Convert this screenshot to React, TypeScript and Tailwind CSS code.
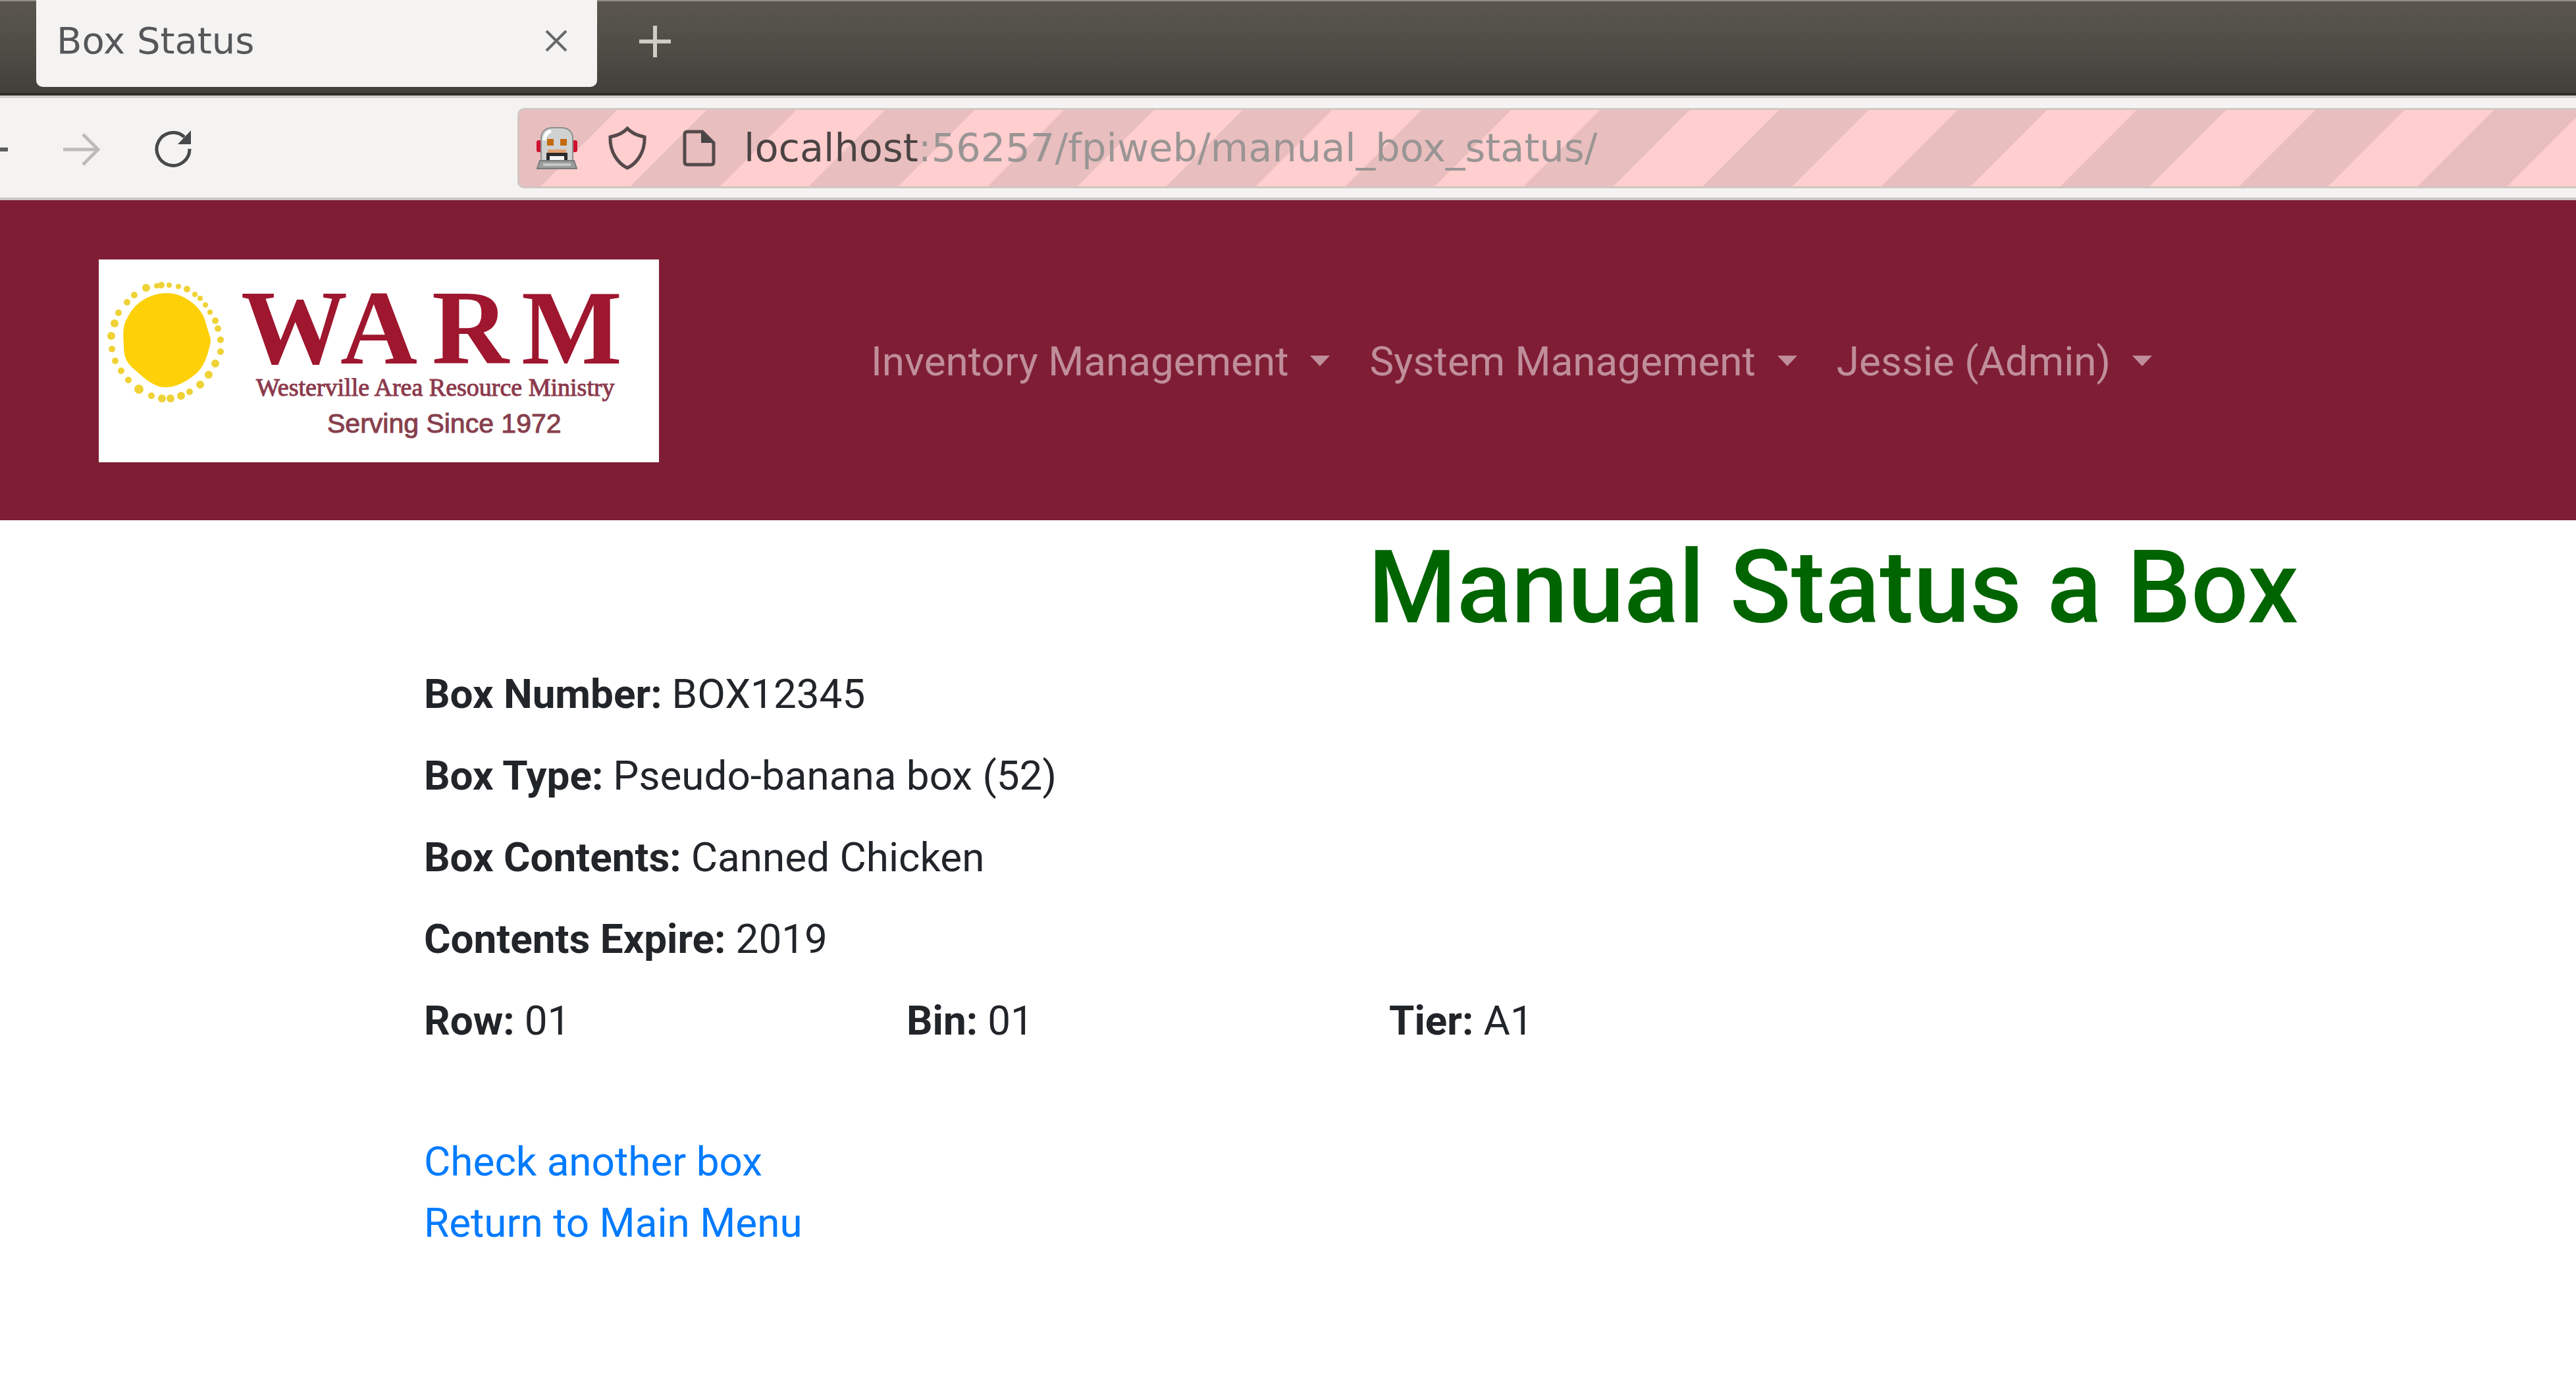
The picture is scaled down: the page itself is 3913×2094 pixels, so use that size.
import React from "react";

// Centre and radius of each ray around the sun.
const RAYS = [
  [72, 43, 6], [88, 40, 4], [95, 39, 5], [107, 39, 4], [121, 41, 4], [134, 45, 5], [146, 53, 4], [154, 59, 4],
  [162, 69, 4], [169, 80, 4], [177, 93, 5], [181, 105, 5], [185, 122, 5], [185, 140, 5], [177, 158, 6], [167, 175, 6],
  [154, 190, 6], [138, 201, 5], [125, 207, 6], [109, 211, 6], [96, 211, 6], [80, 207, 5], [61, 197, 7], [45, 183, 5],
  [34, 169, 5], [25, 154, 5], [20, 136, 5], [19, 116, 6], [24, 97, 6], [30, 81, 5], [43, 65, 5], [54, 54, 5],
];

function WarmLogo() {
  return (
    <svg viewBox="0 0 851 308" className="h-[308px] w-[851px] shrink-0 bg-white" role="img" aria-label="WARM logo">
      <path
        d="M104 51C128 51 158 71 163 98C167 113 172 120 169 130C165 145 161 163 146 175C131 187 115 195 99 194C81 193 65 176 53 166C42 156 38 148 38 130C37 113 36 100 44 88C55 64 80 51 104 51Z"
        fill="#fdd008"
      />
      {RAYS.map(([x, y, r]) => (
        <circle key={`${x}-${y}`} cx={x} cy={y} r={r} fill="#efd235" />
      ))}
      <g fill="#9f162f" fontFamily="Liberation Serif" fontWeight="700" fontSize="162">
        <text x="216" y="158">W</text>
        <text x="367" y="158">A</text>
        <text x="506" y="158">R</text>
        <text x="642" y="158">M</text>
      </g>
      <text x="239" y="207" fill="#8c3a4c" fontFamily="Liberation Serif" fontSize="38" stroke="#8c3a4c" strokeWidth="1">
        Westerville Area Resource Ministry
      </text>
      <text x="347" y="263" fill="#87404d" fontFamily="Liberation Sans" fontSize="41" stroke="#87404d" strokeWidth="1">
        Serving Since 1972
      </text>
    </svg>
  );
}

function RobotIcon() {
  return (
    <svg viewBox="0 0 62 64" className="h-[64px] w-[62px] shrink-0" aria-hidden="true">
      <rect x="0" y="20" width="8" height="18" rx="3" fill="#d0102e" />
      <rect x="54" y="20" width="8" height="18" rx="3" fill="#d0102e" />
      <path d="M7 53V15Q9 2 23 1H39Q53 2 55 15V53Z" fill="#cfd2d1" stroke="#8d908f" strokeWidth="2" />
      <path d="M12 20Q13 8 22 6" fill="none" stroke="#ffffff" strokeWidth="5" />
      <rect x="16" y="18" width="10" height="10" fill="#c4690c" />
      <rect x="36" y="18" width="10" height="10" fill="#c4690c" />
      <rect x="17" y="34" width="28" height="6" fill="#e0a070" />
      <path d="M15 39H47V51H42V45H20V51H15Z" fill="#2b2b2b" />
      <rect x="20" y="44" width="22" height="6" fill="#f4f4f4" />
      <path d="M5 51H57L61 63H1Z" fill="#9a9d9c" stroke="#777a79" strokeWidth="2" />
      <path d="M10 57H52" stroke="#c5c8c7" strokeWidth="4" />
    </svg>
  );
}

function MenuItem({ label }: { label: string }) {
  return (
    <button type="button" className="flex items-center gap-[33px] whitespace-nowrap text-[62px] leading-[93px] text-white/50">
      {label}
      <svg viewBox="0 0 30 16" className="h-[16px] w-[30px]" aria-hidden="true">
        <path d="M0 0H30L15 16Z" fill="currentColor" />
      </svg>
    </button>
  );
}

function Field({ label, value }: { label: string; value: string }) {
  return (
    <div className="flex gap-[15px]">
      <dt className="font-bold">{label}:</dt>
      <dd>{value}</dd>
    </div>
  );
}

export default function App() {
  return (
    <div className="min-h-screen overflow-hidden bg-white font-['Roboto',sans-serif] text-[#212529]">
      <div className="flex h-[145px] items-start border-t-2 border-b-4 border-t-[#8f8e87] border-b-[#2f2e2b] bg-linear-to-b from-[#5a564d] via-[#4e4d46] to-[#42403b] pl-[55px] font-['DejaVu_Sans',sans-serif]">
        <div className="-mt-[2px] flex h-[132px] w-[852px] items-center justify-between rounded-b-[10px] bg-[#f4f3f1] pr-[45px] pb-[8px] pl-[31px]">
          <span className="text-[56px] leading-[64px] text-[#55575a]">Box Status</span>
          <button type="button" aria-label="Close tab">
            <svg viewBox="0 0 34 34" className="size-[34px]" fill="none" stroke="#66686a" strokeWidth="4" aria-hidden="true">
              <path d="M2 2 32 32M32 2 2 32" />
            </svg>
          </button>
        </div>
        <button type="button" aria-label="New tab" className="mt-[37px] ml-[64px]">
          <svg viewBox="0 0 48 48" className="size-[48px]" fill="none" stroke="#cfcdc3" strokeWidth="6" aria-hidden="true">
            <path d="M24 0V48M0 24H48" />
          </svg>
        </button>
      </div>

      <div className="flex h-[159px] items-center border-t-4 border-b-4 border-t-[#d0cfcb] border-b-[#c9c5c1] bg-[#f4f3f1]">
        <div className="flex w-[786px] shrink-0 items-center pt-[4px]">
          <button type="button" aria-label="Back">
            <svg viewBox="0 0 14 56" className="h-[56px] w-[14px]" fill="none" stroke="#5c5c5c" strokeWidth="6" aria-hidden="true">
              <path d="M0 28H12" />
            </svg>
          </button>
          <button type="button" aria-label="Forward" className="ml-[82px]">
            <svg viewBox="0 0 56 56" className="size-[56px]" fill="none" stroke="#bcbbb9" strokeWidth="5" aria-hidden="true">
              <path d="M0 28H52M30 5 53 28 30 51" />
            </svg>
          </button>
          <button type="button" aria-label="Reload" className="ml-[82px]">
            <svg viewBox="0 0 58 58" className="size-[58px]" fill="none" aria-hidden="true">
              <path d="M46 10A25 25 0 1 0 54 28" stroke="#46484a" strokeWidth="5" />
              <path d="M56 0V21H36Z" fill="#46484a" />
            </svg>
          </button>
        </div>
        <div className="flex h-[122px] min-w-0 flex-1 items-center rounded-l-[10px] border-3 border-r-0 border-[#d2c6c2] bg-[linear-gradient(135deg,#e9bebe_20px,transparent_20px),repeating-linear-gradient(135deg,#e9bebe_9px,#e9bebe_105px,#ffcece_105px,#ffcece_201px)] pl-[26px]">
          <RobotIcon />
          <svg viewBox="0 0 58 66" className="ml-[47px] h-[66px] w-[58px] shrink-0" fill="none" stroke="#55494b" strokeWidth="5" aria-hidden="true">
            <path d="M29 3C23 10 13 14 3 16C2 38 14 56 29 63C44 56 56 38 55 16C45 14 35 10 29 3Z" />
          </svg>
          <svg viewBox="0 0 50 56" className="ml-[55px] h-[56px] w-[50px] shrink-0" fill="none" aria-hidden="true">
            <path d="M7 3H30L47 20V49Q47 53 43 53H7Q3 53 3 49V7Q3 3 7 3Z" stroke="#55494b" strokeWidth="5" />
            <path d="M28 2 48 20H28Z" fill="#484545" />
          </svg>
          <input
            type="text"
            aria-label="Address"
            defaultValue="localhost:56257/fpiweb/manual_box_status/"
            className="ml-[43px] h-[100px] min-w-0 flex-1 bg-[linear-gradient(90deg,#4b4344_266px,#9a9595_266px)] bg-clip-text p-0 font-['DejaVu_Sans',sans-serif] text-[59px] text-transparent outline-none"
          />
        </div>
      </div>

      <nav className="flex items-center bg-[#7f1d35] pt-[90px] pb-[88px] pl-[150px]">
        <WarmLogo />
        <div className="ml-[322px] flex gap-[60px]">
          <MenuItem label="Inventory Management" />
          <MenuItem label="System Management" />
          <MenuItem label="Jessie (Admin)" />
        </div>
      </nav>

      <main>
        <h1 className="mt-[10px] pl-[2078px] text-[154px] leading-[185px] font-medium whitespace-nowrap text-[#006400]">
          Manual Status a Box
        </h1>
        <dl className="mt-[22px] flex flex-col gap-[31px] pl-[644px] text-[62px] leading-[93px]">
          <Field label="Box Number" value="BOX12345" />
          <Field label="Box Type" value="Pseudo-banana box (52)" />
          <Field label="Box Contents" value="Canned Chicken" />
          <Field label="Contents Expire" value="2019" />
          <div className="grid grid-cols-[repeat(3,733px)]">
            <Field label="Row" value="01" />
            <Field label="Bin" value="01" />
            <Field label="Tier" value="A1" />
          </div>
        </dl>
        <div className="mt-[121px] flex flex-col items-start pl-[644px] text-[62px] leading-[93px] text-[#007bff]">
          <a href="#check">Check another box</a>
          <a href="#menu">Return to Main Menu</a>
        </div>
      </main>
    </div>
  );
}
